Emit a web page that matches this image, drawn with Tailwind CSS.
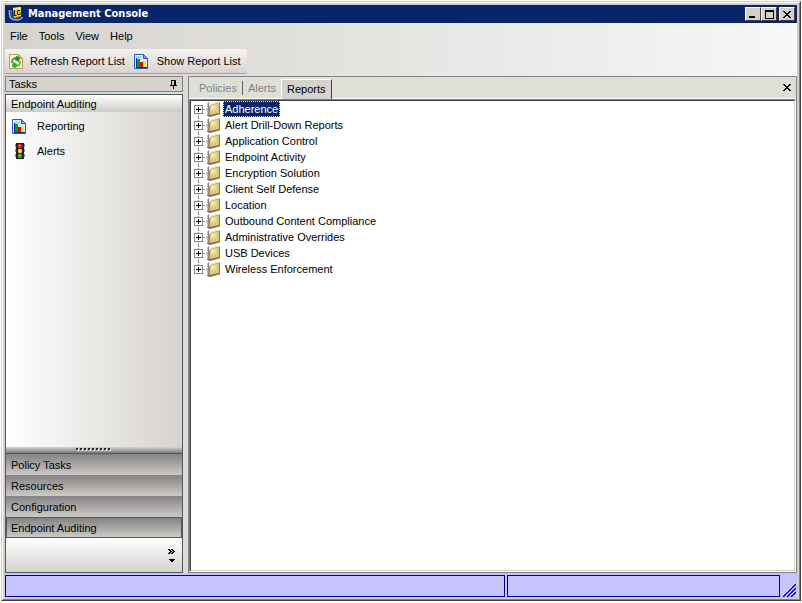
<!DOCTYPE html>
<html lang="en">
<head>
    <meta charset="UTF-8">
    <meta name="viewport" content="width=device-width, initial-scale=1.0">
    <title>Management Console</title>
    <script src="https://cdn.jsdelivr.net/npm/@tailwindcss/browser@4"></script>
</head>
<body class="h-screen bg-white pt-px pr-px pb-[2px] pl-px font-['Liberation_Sans',Arial,sans-serif] text-[11px] leading-[16px] text-black">

    <!-- Shared icons -->
    <svg class="hidden" aria-hidden="true">
        <symbol id="folder" viewBox="0 0 14 16">
            <path d="M0 3L2 1h8l1 1v2L4 6v8l-2 1H0z" fill="#8c8a94"/>
            <path d="M0 3l1-1v12H0z" fill="#bdbac6"/>
            <path d="M2 1h8v2L4 5H2z" fill="#f0f0f7"/>
            <path d="M3 4l9-2.500h1V13l-2 1-8 2H1l2-3z" fill="#ad9452"/>
            <path d="M3 4l9-2v10l-9 3z" fill="#dec77b"/>
            <path d="M4 5l6-1.500V9l-6 2z" fill="#e7d794"/>
            <path d="M4 5l4-1v3L4 9z" fill="#f2e6b4"/>
            <path d="M12 2h1v11l-1 1z" fill="#947b31"/>
            <path d="M1 15l2-1 9-2v1l-8 2.500H1z" fill="#7b6b42"/>
        </symbol>
        <symbol id="report" viewBox="0 0 14 15">
            <path d="M.5.5h9l4 4v10H.5z" fill="#dff0ff" stroke="#2159c6"/>
            <path d="M9.500.5v4h4z" fill="#7bb2f7" stroke="#2159c6"/>
            <path d="M2 2h6v3H2z" fill="#b5dbff"/>
            <path d="M3 5h3v8H3z" fill="#00a210"/>
            <path d="M6 8h3v5H6z" fill="#d60800"/>
            <path d="M9 7h3v6H9z" fill="#ffdf00"/>
            <path d="M2 4h1v9h10v1H2z" fill="#003494"/>
        </symbol>
    </svg>

    <div class="flex h-full flex-col border border-t-[#d4d0c8] border-l-[#d4d0c8] border-r-[#404040] border-b-[#404040]">
        <div class="flex min-h-0 flex-1 flex-col border border-t-white border-l-white border-r-[#808080] border-b-[#808080] bg-[#d4d0c8] p-[2px] pb-px">

            <!-- Title bar -->
            <header class="flex h-[18px] shrink-0 items-center bg-[#08246b] pr-[2px] pl-[3px] text-white">
                <svg class="h-4 w-4" viewBox="0 0 16 16" aria-hidden="true">
                    <path d="M1.500 4v4c0 4 3 6 7 6 3 0 5-1 6-3" fill="none" stroke="#9cb6e7" stroke-width="1.500"/>
                    <path d="M3.500 4v4c0 3 2 4 5 4 2 0 4-1 5-2" fill="none" stroke="#4a6db5" stroke-width="1"/>
                    <path d="M5 2l8-1v9l-7 2z" fill="#ffc821"/>
                    <path d="M5 2l8-1v2L5 4z" fill="#ffe784"/>
                    <path d="M6.500 4v5.500h2M12 4.500H9.500v4H12V6.500" fill="none" stroke="#211c10" stroke-width="1"/>
                </svg>
                <h1 class="ml-1 font-['DejaVu_Sans_Condensed','Open_Sans',sans-serif] font-bold">Management Console</h1>
                <div class="ml-auto flex">
                    <button aria-label="Minimize" class="flex h-[14px] w-4 items-center justify-center border border-t-white border-l-white border-r-[#404040] border-b-[#404040] bg-[#d4d0c8]">
                        <svg class="h-2 w-2" viewBox="0 0 8 8"><path d="M0 6h6v2H0z"/></svg>
                    </button>
                    <button aria-label="Maximize" class="flex h-[14px] w-4 items-center justify-center border border-t-white border-l-white border-r-[#404040] border-b-[#404040] bg-[#d4d0c8]">
                        <svg class="h-[9px] w-[9px]" viewBox="0 0 9 9"><path d="M0 0h9v9H0zM1 2v6h7V2z" fill-rule="evenodd"/></svg>
                    </button>
                    <button aria-label="Close" class="ml-[2px] flex h-[14px] w-4 items-center justify-center border border-t-white border-l-white border-r-[#404040] border-b-[#404040] bg-[#d4d0c8]">
                        <svg class="h-[7px] w-2" viewBox="0 0 8 7" shape-rendering="crispEdges"><path d="M0 0h2v1h1v1h2V1h1V0h2v1H7v1H6v1H5v1h1v1h1v1h1v1H6V6H5V5H3v1H2v1H0V6h1V5h1V4h1V3H2V2H1V1H0z"/></svg>
                    </button>
                </div>
            </header>

            <div class="flex min-h-0 flex-1 flex-col bg-linear-to-r from-[#d6d3ce] to-[#f7f7f7] pt-px">
                <!-- Menu bar -->
                <nav class="flex h-[25px] shrink-0 items-center gap-[11px] pl-[5px] pb-[2px]">
                    <button>File</button>
                    <button>Tools</button>
                    <button>View</button>
                    <button>Help</button>
                </nav>

                <!-- Toolbar -->
                <div class="mb-[2px] flex h-[25px] shrink-0 items-center gap-[9px] self-start rounded-r-[2px] border-b border-[#a5a2a0] bg-linear-to-b from-[#f5f2f2] to-[#d8d3d3] pr-[6px] pl-1">
                    <button class="flex items-center gap-[7px]">
                        <svg class="h-[15px] w-[14px]" viewBox="0 0 14 15" aria-hidden="true">
                            <path d="M.5.5h9l4 4v10H.5z" fill="#fff7d6" stroke="#c69a39"/>
                            <path d="M9.500.5v4h4z" fill="#f7d78c" stroke="#c69a39"/>
                            <path d="M3 9c-.5-4 2-5 5-5" fill="none" stroke="#42a663" stroke-width="2"/>
                            <path d="M7 2l4 1-1 5-4-2z" fill="#189231"/>
                            <path d="M11 7c.5 4-2 5-5 5" fill="none" stroke="#4ac76b" stroke-width="2"/>
                            <path d="M7 14l-4-1 1-5 4 2z" fill="#29a64a"/>
                        </svg>
                        Refresh Report List
                    </button>
                    <button class="flex items-center gap-[9px]">
                        <svg class="h-[15px] w-[14px]" aria-hidden="true"><use href="#report"/></svg>
                        Show Report List
                    </button>
                </div>

                <main class="flex min-h-0 flex-1 gap-[5px]">
                    <!-- Task pane -->
                    <aside class="flex w-[178px] shrink-0 flex-col gap-[2px]">
                        <div class="flex h-4 shrink-0 items-center justify-between border border-[#848284] bg-[#d6d3ce] pr-[5px] pl-[3px]">
                            <h2>Tasks</h2>
                            <button aria-label="Auto hide">
                                <svg class="h-[9px] w-[7px]" viewBox="0 0 7 9" shape-rendering="crispEdges"><path d="M1 0h5v5h1v1H4v3H3V6H0V5h1zM2 1v4h2V1z" fill-rule="evenodd"/></svg>
                            </button>
                        </div>

                        <div class="flex min-h-0 flex-1 flex-col border border-[#4a5d63]">
                            <h3 class="h-[17px] shrink-0 bg-linear-to-b from-white to-[#cecbc6] pt-px pl-[5px]">Endpoint Auditing</h3>
                            <div class="flex min-h-0 flex-1 flex-col gap-[9px] bg-linear-to-r from-white to-[#d6d3ce] pt-[6px] pl-[6px]">
                                <a href="#" class="flex items-center gap-[11px]">
                                    <svg class="h-[15px] w-[14px]" aria-hidden="true"><use href="#report"/></svg>
                                    Reporting
                                </a>
                                <a href="#" class="flex items-center gap-[11px]">
                                    <svg class="h-4 w-[14px]" viewBox="0 0 14 16" aria-hidden="true">
                                        <path d="M4 0h8v16H4z" fill="#212421"/>
                                        <path d="M3 1h1v3H3zM3 6h1v3H3zM3 11h1v3H3zM12 1h1v3h-1zM12 6h1v3h-1zM12 11h1v3h-1z" fill="#8c8e8c"/>
                                        <circle cx="8" cy="3" r="2.200" fill="#ef2818"/>
                                        <circle cx="8" cy="8" r="2.200" fill="#ffcf18"/>
                                        <circle cx="8" cy="13" r="2.200" fill="#29a631"/>
                                        <path d="M7 2h1v1H7zM7 7h1v1H7zM7 12h1v1H7z" fill="#fff"/>
                                    </svg>
                                    Alerts
                                </a>
                            </div>
                            <div class="flex h-[7px] shrink-0 items-start justify-center border-b border-[#4a5d63] bg-linear-to-b from-[#d6d3ce] to-[#7b7d7b] pt-px">
                                <svg class="h-[3px] w-[36px]" viewBox="0 0 36 3" shape-rendering="crispEdges" aria-hidden="true">
                                    <path d="M1 2h35" stroke="#fff" stroke-width="2" stroke-dasharray="2 2"/>
                                    <path d="M0 1h35" stroke="#292829" stroke-width="2" stroke-dasharray="2 2"/>
                                </svg>
                            </div>
                            <div class="flex shrink-0 flex-col">
                                <button class="h-[21px] bg-linear-to-b from-[#848284] to-[#cecbc6] pl-[5px] text-left">Policy Tasks</button>
                                <button class="h-[21px] bg-linear-to-b from-[#848284] to-[#cecbc6] pl-[5px] text-left">Resources</button>
                                <button class="h-[21px] bg-linear-to-b from-[#848284] to-[#cecbc6] pl-[5px] text-left">Configuration</button>
                                <button class="h-[21px] border border-[#4a5d63] bg-linear-to-b from-[#848284] to-[#cecbc6] pl-1 text-left">Endpoint Auditing</button>
                            </div>
                            <div class="flex h-[34px] shrink-0 items-center justify-end bg-linear-to-b from-white to-[#d6d3ce] pr-[7px]">
                                <button aria-label="Configure buttons">
                                    <svg class="h-[13px] w-[7px]" viewBox="0 0 7 13" shape-rendering="crispEdges"><path d="M0 0h2v1h1v1h1v1H3v1H2v1H0V4h1V3h1V2H1V1H0zM3 0h2v1h1v1h1v1H6v1H5v1H3V4h1V3h1V2H4V1H3zM1 10h6v1H6v1H5v1H3v-1H2v-1H1z"/></svg>
                                </button>
                            </div>
                        </div>
                    </aside>

                    <!-- Document area -->
                    <section class="flex min-w-0 flex-1 flex-col border border-[#848284] bg-[#dedfd6]">
                        <div class="flex h-[22px] shrink-0 items-end border-b border-white pl-[5px]">
                            <div class="flex items-end" role="tablist">
                                <button role="tab" class="h-5 px-[5px] text-[#848284]">Policies</button>
                                <span class="mb-[3px] h-[14px] w-px bg-[#636563]"></span>
                                <button role="tab" class="h-5 px-[5px] text-[#848284]">Alerts</button>
                                <button role="tab" aria-selected="true" class="-mb-px h-5 border-t border-r border-l border-t-white border-r-[#404040] border-l-white bg-[#d6d3ce] px-[5px] pb-px">Reports</button>
                            </div>
                            <button aria-label="Close tab" class="mr-[5px] mb-[7px] ml-auto">
                                <svg class="h-[7px] w-2" viewBox="0 0 8 7" shape-rendering="crispEdges"><path d="M0 0h2v1h1v1h2V1h1V0h2v1H7v1H6v1H5v1h1v1h1v1h1v1H6V6H5V5H3v1H2v1H0V6h1V5h1V4h1V3H2V2H1V1H0z"/></svg>
                            </button>
                        </div>

                        <div class="flex min-h-0 flex-1 border border-t-[#808080] border-l-[#808080] border-r-white border-b-white">
                            <ul id="report-tree" class="flex-1 overflow-hidden border border-t-[#404040] border-l-[#404040] border-r-[#d4d0c8] border-b-[#d4d0c8] bg-white pl-[3px]"></ul>
                        </div>
                    </section>
                </main>
            </div>

            <!-- Status bar -->
            <footer class="flex h-[25px] shrink-0 gap-[2px] bg-[#c6c3ff] pt-[2px] pb-px">
                <div class="w-[500px] border border-[#00009c]"></div>
                <div class="flex-1 border border-[#00009c]"></div>
                <svg class="mr-px ml-px h-[14px] w-[13px] self-end" viewBox="0 0 13 14" aria-hidden="true">
                    <path d="M-1 13L12 0M3 13l9-9M7 13l5-5" stroke="#fff" stroke-width="1"/>
                    <path d="M0 14L13 1M4 14l9-9M8 14l5-5" stroke="#00009c" stroke-width="1.500"/>
                </svg>
            </footer>
        </div>
    </div>

    <script>
        const reports = [
            'Adherence',
            'Alert Drill-Down Reports',
            'Application Control',
            'Endpoint Activity',
            'Encryption Solution',
            'Client Self Defense',
            'Location',
            'Outbound Content Compliance',
            'Administrative Overrides',
            'USB Devices',
            'Wireless Enforcement'
        ];

        // The first report group is the selected one
        document.getElementById('report-tree').innerHTML = reports.map((name, i) => `
            <li class="flex h-4 items-center">
                <span class="flex h-4 w-[9px] flex-col items-center">
                    <span class="h-1 border-l border-dotted ${i === 0 ? 'border-transparent' : 'border-[#848284]'}"></span>
                    <button aria-label="Expand ${name}" class="flex h-[9px] w-[9px] shrink-0 items-center justify-center border border-[#848284] bg-white">
                        <svg class="h-[5px] w-[5px]" viewBox="0 0 5 5"><path d="M2 0h1v2h2v1H3v2H2V3H0V2h2z"/></svg>
                    </button>
                    <span class="h-[3px] border-l border-dotted ${i === reports.length - 1 ? 'border-transparent' : 'border-[#848284]'}"></span>
                </span>
                <span class="w-1 border-t border-dotted border-[#848284]"></span>
                <svg class="h-4 w-[14px]" aria-hidden="true"><use href="#folder"/></svg>
                <span class="ml-[2px] border border-dotted px-px leading-[14px] ${i === 0 ? 'border-[#f7db94] bg-[#08246b] text-white' : 'border-transparent'}">${name}</span>
            </li>
        `).join('');
    </script>
</body>
</html>
